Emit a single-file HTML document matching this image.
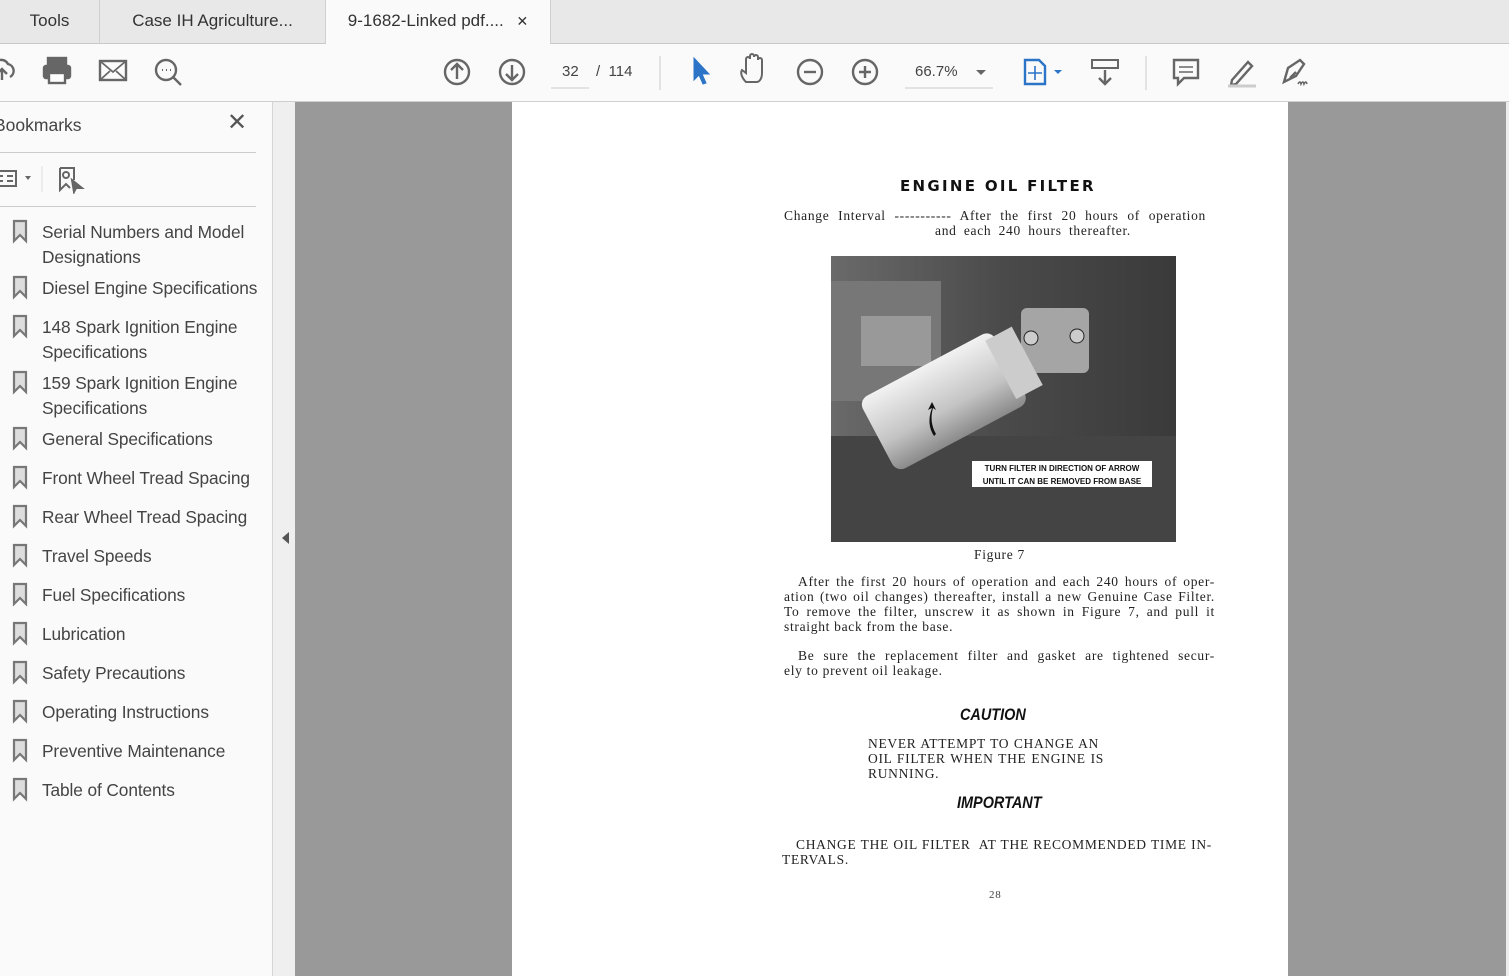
<!DOCTYPE html>
<html><head><meta charset="utf-8"><style>
*{margin:0;padding:0;box-sizing:border-box}
body{width:1509px;height:976px;overflow:hidden;background:#999;font-family:"Segoe UI","Liberation Sans",sans-serif;position:relative}
.abs{position:absolute}
#tabs{left:0;top:0;width:1509px;height:44px;background:#e8e8e8;border-bottom:1px solid #c8c8c8}
.tab{position:absolute;top:0;height:44px;font-size:17px;color:#333;line-height:42px;text-align:center;border-right:1px solid #cfcfcf}
#tb{left:0;top:44px;width:1509px;height:58px;background:#fafafa;border-bottom:1px solid #cfcfcf}
#side{left:0;top:102px;width:273px;height:874px;background:#fafafa;border-right:1px solid #d6d6d6}
#strip{left:273px;top:102px;width:22px;height:874px;background:#efefef}
.bm{position:absolute;left:42px;font-size:17.3px;color:#444;line-height:25px;letter-spacing:-0.1px}
#page{left:512px;top:102px;width:776px;height:874px;background:#fff}
.ser{font-family:"Liberation Serif",serif;color:#222;font-size:13.5px;letter-spacing:0.7px}
.ln{position:absolute;height:15px;line-height:15px;text-align:justify;text-align-last:justify;white-space:nowrap}
</style></head><body>
<div id="tabs" class="abs">
 <div class="tab" style="left:0;width:100px">Tools</div>
 <div class="tab" style="left:100px;width:226px">Case IH Agriculture...</div>
 <div class="tab" style="left:326px;width:225px;background:#fafafa;height:45px">9-1682-Linked pdf.... <span style="font-size:14px;margin-left:8px">✕</span></div>
</div>
<div id="tb" class="abs">
<svg width="1509" height="58" style="position:absolute;left:0;top:0" fill="none" stroke="#666" stroke-width="2.4">
 <path d="M2 36 v-10 M-3 30 l5-5 5 5 M10 33 a7 7 0 0 0 -2-13 a8 8 0 0 0 -14 0"/>
 <rect x="44" y="22" width="26" height="12" rx="2" fill="#666"/><rect x="48" y="14" width="18" height="8" fill="#666"/><rect x="49" y="29" width="16" height="10" fill="#fff"/>
 <rect x="100" y="17" width="26" height="19"/><path d="M100 17 l13 11 13-11 M100 36 l10-9 M126 36 l-10-9" stroke-width="1.8"/>
 <circle cx="166" cy="26" r="10"/><path d="M173 33 l8 8"/><path d="M162 26h1 M166 26h1 M170 26h1" stroke-width="2"/>
 <circle cx="457" cy="28" r="12"/><path d="M457 35 v-14 M451 26 l6-6 6 6"/>
 <circle cx="512" cy="28" r="12"/><path d="M512 21 v14 M506 30 l6 6 6-6"/>
 <path d="M551 44 h38 M660 12 v34 M905 44 h88 M1146 12 v34" stroke="#ccc" stroke-width="1"/>
 <path d="M694 14 v22 l5-5 4 9 3-1 -4-9 7 0z" fill="#2b74c7" stroke="#2b74c7" stroke-width="1"/>
 <path d="M746 38 c-4-4-6-9-4-12 l4 3 v-14 a2 2 0 0 1 4 0 v-3 a2 2 0 0 1 4 0 v1 a2 2 0 0 1 4 0 v3 a2 2 0 0 1 4 0 v13 c0 6-3 9-5 9z" stroke-width="2"/>
 <circle cx="810" cy="28" r="12"/><path d="M804 28h12"/>
 <circle cx="865" cy="28" r="12"/><path d="M859 28h12 M865 22v12"/>
 <path d="M976 26 l5 5 5-5z" fill="#666" stroke="none"/>
 <path d="M1025 16 h14 l6 6 v18 h-20z" stroke="#2b74c7"/><path d="M1035 22v14 M1028 29h14" stroke="#2b74c7" stroke-width="1.6"/><path d="M1054 26 l4 4 4-4z" fill="#2b74c7" stroke="none"/>
 <rect x="1092" y="16" width="26" height="8" stroke-width="2"/><path d="M1105 26 v14 M1099 34 l6 6 6-6"/>
 <path d="M1174 16 h24 v18 h-14 l-6 6 v-6 h-4z"/><path d="M1179 23h14 M1179 28h14" stroke-width="1.6"/>
 <path d="M1232 36 l16-18 4 4 -16 18 -5 1z"/><path d="M1228 42 h28" stroke="#ccc" stroke-width="3"/>
 <path d="M1284 38 l4-14 12-8 4 4 -8 12z M1290 34 l6-6"/><path d="M1298 40 q2-4 3 0 q2-4 3 0 q2-4 3 0" stroke-width="1.6"/>
</svg>
 <div class="abs" style="left:562px;top:19px;font-size:15px;color:#444">32</div>
 <div class="abs" style="left:596px;top:19px;font-size:15px;color:#444">/&nbsp;&nbsp;114</div>
 <div class="abs" style="left:915px;top:19px;font-size:15px;color:#444">66.7%</div>
</div>
<div id="side" class="abs">
 <div class="abs" style="left:-6px;top:13px;font-size:17.5px;color:#444">Bookmarks</div>
 <div class="abs" style="left:227px;top:6px;font-size:24px;color:#555">✕</div>
 <div class="abs" style="left:0;top:50px;width:256px;height:1px;background:#ccc"></div>
 <svg class="abs" style="left:0;top:62px" width="100" height="30" fill="none" stroke="#666" stroke-width="2">
  <rect x="-4" y="7" width="20" height="15"/><path d="M0 12h3 M7 12h6 M0 17h3 M7 17h6"/><path d="M25 12 l3 4 3-4z" fill="#666" stroke="none"/>
  <path d="M42 2 v26" stroke="#ddd" stroke-width="1"/>
  <path d="M60 4 h14 v12 M60 4 v22 l6-6 4 4"/><circle cx="66" cy="11" r="3"/><path d="M72 16 l10 8 -6 0 -2 4z" fill="#666"/>
 </svg>
 <div class="abs" style="left:0;top:104px;width:256px;height:1px;background:#ccc"></div>
 <svg class="abs" style="left:0;top:0" width="40" height="874" fill="#ddd" stroke="#777" stroke-width="2.2">
  <g id="b"><path d="M14 119 h12 v20 l-6-6 -6 6z"/></g>
  <use href="#b" y="56"/><use href="#b" y="95"/><use href="#b" y="151"/><use href="#b" y="207"/><use href="#b" y="246"/><use href="#b" y="285"/><use href="#b" y="324"/><use href="#b" y="363"/><use href="#b" y="402"/><use href="#b" y="441"/><use href="#b" y="480"/><use href="#b" y="519"/><use href="#b" y="558"/>
 </svg>
 <div class="bm" style="top:118px">Serial Numbers and Model<br>Designations</div>
 <div class="bm" style="top:174px">Diesel Engine Specifications</div>
 <div class="bm" style="top:213px">148 Spark Ignition Engine<br>Specifications</div>
 <div class="bm" style="top:269px">159 Spark Ignition Engine<br>Specifications</div>
 <div class="bm" style="top:325px">General Specifications</div>
 <div class="bm" style="top:364px">Front Wheel Tread Spacing</div>
 <div class="bm" style="top:403px">Rear Wheel Tread Spacing</div>
 <div class="bm" style="top:442px">Travel Speeds</div>
 <div class="bm" style="top:481px">Fuel Specifications</div>
 <div class="bm" style="top:520px">Lubrication</div>
 <div class="bm" style="top:559px">Safety Precautions</div>
 <div class="bm" style="top:598px">Operating Instructions</div>
 <div class="bm" style="top:637px">Preventive Maintenance</div>
 <div class="bm" style="top:676px">Table of Contents</div>
</div>
<div id="strip" class="abs"><svg class="abs" style="left:6px;top:428px" width="12" height="16"><path d="M10 2 L3 8 L10 14z" fill="#555"/></svg></div>
<div class="abs" style="left:1506px;top:102px;width:3px;height:874px;background:#ededed"></div>
<div id="page" class="abs">
 <div class="abs" style="left:388px;top:75px;font-family:'DejaVu Sans','Liberation Sans',sans-serif;font-weight:bold;font-size:15px;letter-spacing:2.3px;color:#111">ENGINE OIL FILTER</div>
 <div class="ser">
 <div class="ln" style="left:272px;top:106px;width:422px">Change Interval ----------- After the first 20 hours of operation</div>
 <div class="ln" style="left:423px;top:121px;width:196px">and each 240 hours thereafter.</div>
 </div>
 <svg class="abs" style="left:319px;top:154px" width="345" height="286">
  <defs>
   <linearGradient id="g1" x1="0" y1="0" x2="1" y2="0"><stop offset="0" stop-color="#6a6a6a"/><stop offset=".5" stop-color="#4a4a4a"/><stop offset="1" stop-color="#3a3a3a"/></linearGradient>
   <linearGradient id="g2" x1="0" y1="0" x2="0" y2="1"><stop offset="0" stop-color="#f2f2f2"/><stop offset=".6" stop-color="#c4c4c4"/><stop offset="1" stop-color="#8a8a8a"/></linearGradient>
  </defs>
  <rect width="345" height="286" fill="url(#g1)"/>
  <rect x="0" y="25" width="110" height="120" fill="#777"/>
  <rect x="30" y="60" width="70" height="50" fill="#999"/>
  <rect x="0" y="180" width="345" height="106" fill="#444"/>
  <rect x="190" y="52" width="68" height="65" rx="6" fill="#a5a5a5"/>
  <circle cx="200" cy="82" r="7" fill="#ccc" stroke="#222"/><circle cx="246" cy="80" r="7" fill="#ccc" stroke="#222"/>
  <g transform="rotate(-28 110 140)"><rect x="35" y="105" width="150" height="82" rx="10" fill="url(#g2)"/><rect x="175" y="112" width="30" height="66" fill="#ccc"/></g>
  <path d="M103 180 q-8-12 -2-28 l-4 2 4-8 4 8 -3-2 q-4 14 3 26z" fill="#111"/>
  <rect x="141" y="205" width="180" height="26" fill="#fff"/>
  <text x="231" y="215" font-family="Liberation Sans" font-weight="bold" font-size="8" text-anchor="middle" fill="#111">TURN FILTER IN DIRECTION OF ARROW</text>
  <text x="231" y="228" font-family="Liberation Sans" font-weight="bold" font-size="8" text-anchor="middle" fill="#111">UNTIL IT CAN BE REMOVED FROM BASE</text>
 </svg>
 <div class="abs ser" style="left:462px;top:445px">Figure 7</div>
 <div class="ser">
 <div class="ln" style="left:286px;top:472px;width:417px">After the first 20 hours of operation and each 240 hours of oper-</div>
 <div class="ln" style="left:272px;top:487px;width:431px">ation (two oil changes) thereafter, install a new Genuine Case Filter.</div>
 <div class="ln" style="left:272px;top:502px;width:431px">To remove the filter, unscrew it as shown in Figure 7, and pull it</div>
 <div class="abs" style="left:272px;top:517px;line-height:15px">straight back from the base.</div>
 <div class="ln" style="left:286px;top:546px;width:417px">Be sure the replacement filter and gasket are tightened secur-</div>
 <div class="abs" style="left:272px;top:561px;line-height:15px">ely to prevent oil leakage.</div>
 </div>
 <div class="abs" style="left:448px;top:603px;font-family:'Liberation Sans',sans-serif;font-weight:bold;font-style:italic;font-size:17px;color:#111;transform:scaleX(0.85);transform-origin:left">CAUTION</div>
 <div class="ser">
 <div class="ln" style="left:356px;top:634px;width:231px">NEVER ATTEMPT TO CHANGE AN</div>
 <div class="ln" style="left:356px;top:649px;width:236px">OIL FILTER WHEN THE ENGINE IS</div>
 <div class="abs" style="left:356px;top:664px;line-height:15px">RUNNING.</div>
 </div>
 <div class="abs" style="left:445px;top:691px;font-family:'Liberation Sans',sans-serif;font-weight:bold;font-style:italic;font-size:17px;color:#111;transform:scaleX(0.85);transform-origin:left">IMPORTANT</div>
 <div class="ser">
 <div class="ln" style="left:284px;top:735px;width:416px">CHANGE THE OIL FILTER&nbsp; AT THE RECOMMENDED TIME IN-</div>
 <div class="abs" style="left:270px;top:750px;line-height:15px">TERVALS.</div>
 </div>
 <div class="abs ser" style="left:477px;top:787px;font-size:11px;color:#444">28</div>
</div>
</body></html>
